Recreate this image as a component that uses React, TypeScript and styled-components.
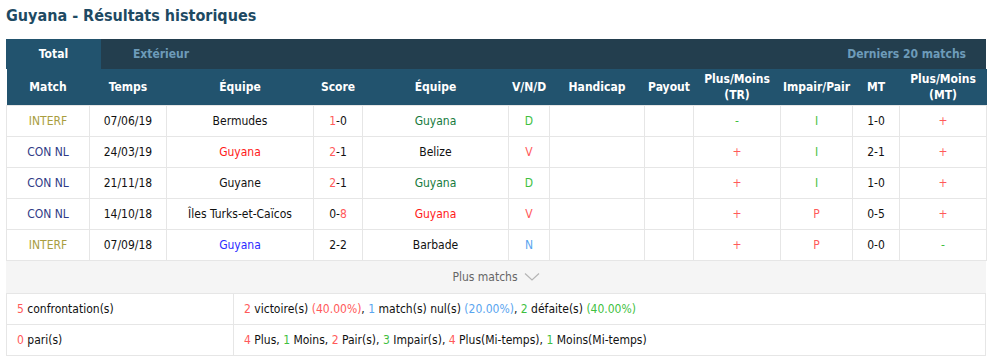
import React from 'react';
import styled, { createGlobalStyle } from 'styled-components';

const GlobalStyle = createGlobalStyle`
  body {
    margin: 0;
    background: #ffffff;
    font-family: Tahoma, "DejaVu Sans Condensed", "DejaVu Sans", sans-serif;
    font-size: 12px;
    color: #222;
  }
`;

const C = {
  red: '#ff5a5a',
  green: '#3fbf3f',
  blue: '#5aa5ef',
  teamRed: '#ff1a1a',
  teamGreen: '#167a3c',
  teamBlue: '#2b2bff',
  interf: '#a99d3e',
  connl: '#2f3b86',
};

const Page = styled.div`
  padding: 0 8px 0 6px;
`;

const Title = styled.h2`
  margin: 0;
  height: 39px;
  line-height: 32px;
  font-size: 16px;
  font-weight: bold;
  color: #1e4a63;
`;

const TabBar = styled.div`
  display: flex;
  align-items: center;
  height: 30px;
  width: 980px;
  background: #233e4e;
`;

const Tab = styled.div<{ $active?: boolean }>`
  width: ${(p) => (p.$active ? '95px' : '120px')};
  height: 100%;
  display: flex;
  align-items: center;
  justify-content: center;
  font-weight: bold;
  font-size: 12px;
  background: ${(p) => (p.$active ? '#22536e' : 'transparent')};
  color: ${(p) => (p.$active ? '#ffffff' : '#6d9bb9')};
`;

const TabNote = styled.div`
  margin-left: auto;
  padding-right: 20px;
  font-weight: bold;
  color: #6d9bb9;
`;

const Table = styled.table`
  width: 980px;
  border-collapse: collapse;
  table-layout: fixed;
`;

const Th = styled.th`
  height: 36px;
  padding: 0;
  background: #22536e;
  color: #ffffff;
  font-weight: bold;
  font-size: 12px;
  line-height: 16px;
  text-align: center;
`;

const Td = styled.td<{ $color?: string }>`
  height: 30px;
  padding: 0;
  border: 1px solid #e6e6e6;
  text-align: center;
  color: ${(p) => p.$color || '#111'};
  white-space: nowrap;
`;

const Span = styled.span<{ $color: string }>`
  color: ${(p) => p.$color};
`;

const MoreRow = styled.div`
  width: 980px;
  height: 33px;
  background: #f5f5f5;
  display: flex;
  align-items: center;
  justify-content: center;
  gap: 6px;
  color: #666;
  border-bottom: 1px solid #e6e6e6;
  box-sizing: border-box;
`;

const Summary = styled.div`
  width: 980px;
  display: grid;
  grid-template-columns: 226px 1fr;
  border-left: 1px solid #e6e6e6;
  border-right: 1px solid #e6e6e6;
  box-sizing: border-box;
`;

const SumCell = styled.div<{ $first?: boolean }>`
  height: 31px;
  display: flex;
  align-items: center;
  padding-left: 10px;
  border-bottom: 1px solid #e6e6e6;
  border-left: ${(p) => (p.$first ? 'none' : '1px solid #e6e6e6')};
  box-sizing: border-box;
  color: #111;
  white-space: pre;
`;

const widths = [83, 77, 147, 49, 146, 41, 95, 49, 87, 72, 47, 87];
const heads: React.ReactNode[] = [
  'Match', 'Temps', 'Équipe', 'Score', 'Équipe', 'V/N/D', 'Handicap', 'Payout',
  <>Plus/Moins<br />(TR)</>, 'Impair/Pair', 'MT', <>Plus/Moins<br />(MT)</>,
];

type Row = {
  league: string; date: string;
  home: string; homeColor?: string;
  score: [string, string]; scoreColor: [string?, string?];
  away: string; awayColor?: string;
  res: string; resColor: string;
  ou: string; oe: string; ht: string; htou: string;
};

const rows: Row[] = [
  { league: 'INTERF', date: '07/06/19', home: 'Bermudes', score: ['1', '0'], scoreColor: [C.red], away: 'Guyana', awayColor: C.teamGreen, res: 'D', resColor: C.green, ou: '-', oe: 'I', ht: '1-0', htou: '+' },
  { league: 'CON NL', date: '24/03/19', home: 'Guyana', homeColor: C.teamRed, score: ['2', '1'], scoreColor: [C.red], away: 'Belize', res: 'V', resColor: C.red, ou: '+', oe: 'I', ht: '2-1', htou: '+' },
  { league: 'CON NL', date: '21/11/18', home: 'Guyane', score: ['2', '1'], scoreColor: [C.red], away: 'Guyana', awayColor: C.teamGreen, res: 'D', resColor: C.green, ou: '+', oe: 'I', ht: '1-0', htou: '+' },
  { league: 'CON NL', date: '14/10/18', home: 'Îles Turks-et-Caïcos', score: ['0', '8'], scoreColor: [undefined, C.red], away: 'Guyana', awayColor: C.teamRed, res: 'V', resColor: C.red, ou: '+', oe: 'P', ht: '0-5', htou: '+' },
  { league: 'INTERF', date: '07/09/18', home: 'Guyana', homeColor: C.teamBlue, score: ['2', '2'], scoreColor: [], away: 'Barbade', res: 'N', resColor: C.blue, ou: '+', oe: 'P', ht: '0-0', htou: '-' },
];

const sign = (s: string) => (s === '+' ? C.red : C.green);

const Chevron = () => (
  <svg width="16" height="10" viewBox="0 0 16 10">
    <path d="M1 1.5 L8 8 L15 1.5" fill="none" stroke="#b5b5b5" strokeWidth="1.2" />
  </svg>
);

export default function App() {
  return (
    <Page>
      <GlobalStyle />
      <Title>Guyana - Résultats historiques</Title>
      <TabBar>
        <Tab $active>Total</Tab>
        <Tab>Extérieur</Tab>
        <TabNote>Derniers 20 matchs</TabNote>
      </TabBar>
      <Table>
        <colgroup>
          {widths.map((w, i) => <col key={i} style={{ width: w }} />)}
        </colgroup>
        <thead>
          <tr>{heads.map((h, i) => <Th key={i}>{h}</Th>)}</tr>
        </thead>
        <tbody>
          {rows.map((r, i) => (
            <tr key={i}>
              <Td $color={r.league === 'INTERF' ? C.interf : C.connl}>{r.league}</Td>
              <Td>{r.date}</Td>
              <Td $color={r.homeColor}>{r.home}</Td>
              <Td>
                <Span $color={r.scoreColor[0] || '#111'}>{r.score[0]}</Span>-
                <Span $color={r.scoreColor[1] || '#111'}>{r.score[1]}</Span>
              </Td>
              <Td $color={r.awayColor}>{r.away}</Td>
              <Td $color={r.resColor}>{r.res}</Td>
              <Td />
              <Td />
              <Td $color={sign(r.ou)}>{r.ou}</Td>
              <Td $color={r.oe === 'I' ? C.green : C.red}>{r.oe}</Td>
              <Td>{r.ht}</Td>
              <Td $color={sign(r.htou)}>{r.htou}</Td>
            </tr>
          ))}
        </tbody>
      </Table>
      <MoreRow>Plus matchs <Chevron /></MoreRow>
      <Summary>
        <SumCell $first><Span $color={C.red}>5</Span> confrontation(s)</SumCell>
        <SumCell>
          <Span $color={C.red}>2</Span> victoire(s) <Span $color={C.red}>(40.00%)</Span>,{' '}
          <Span $color={C.blue}>1</Span> match(s) nul(s) <Span $color={C.blue}>(20.00%)</Span>,{' '}
          <Span $color={C.green}>2</Span> défaite(s) <Span $color={C.green}>(40.00%)</Span>
        </SumCell>
        <SumCell $first><Span $color={C.red}>0</Span> pari(s)</SumCell>
        <SumCell>
          <Span $color={C.red}>4</Span> Plus, <Span $color={C.green}>1</Span> Moins,{' '}
          <Span $color={C.red}>2</Span> Pair(s), <Span $color={C.green}>3</Span> Impair(s),{' '}
          <Span $color={C.red}>4</Span> Plus(Mi-temps), <Span $color={C.green}>1</Span> Moins(Mi-temps)
        </SumCell>
      </Summary>
    </Page>
  );
}
